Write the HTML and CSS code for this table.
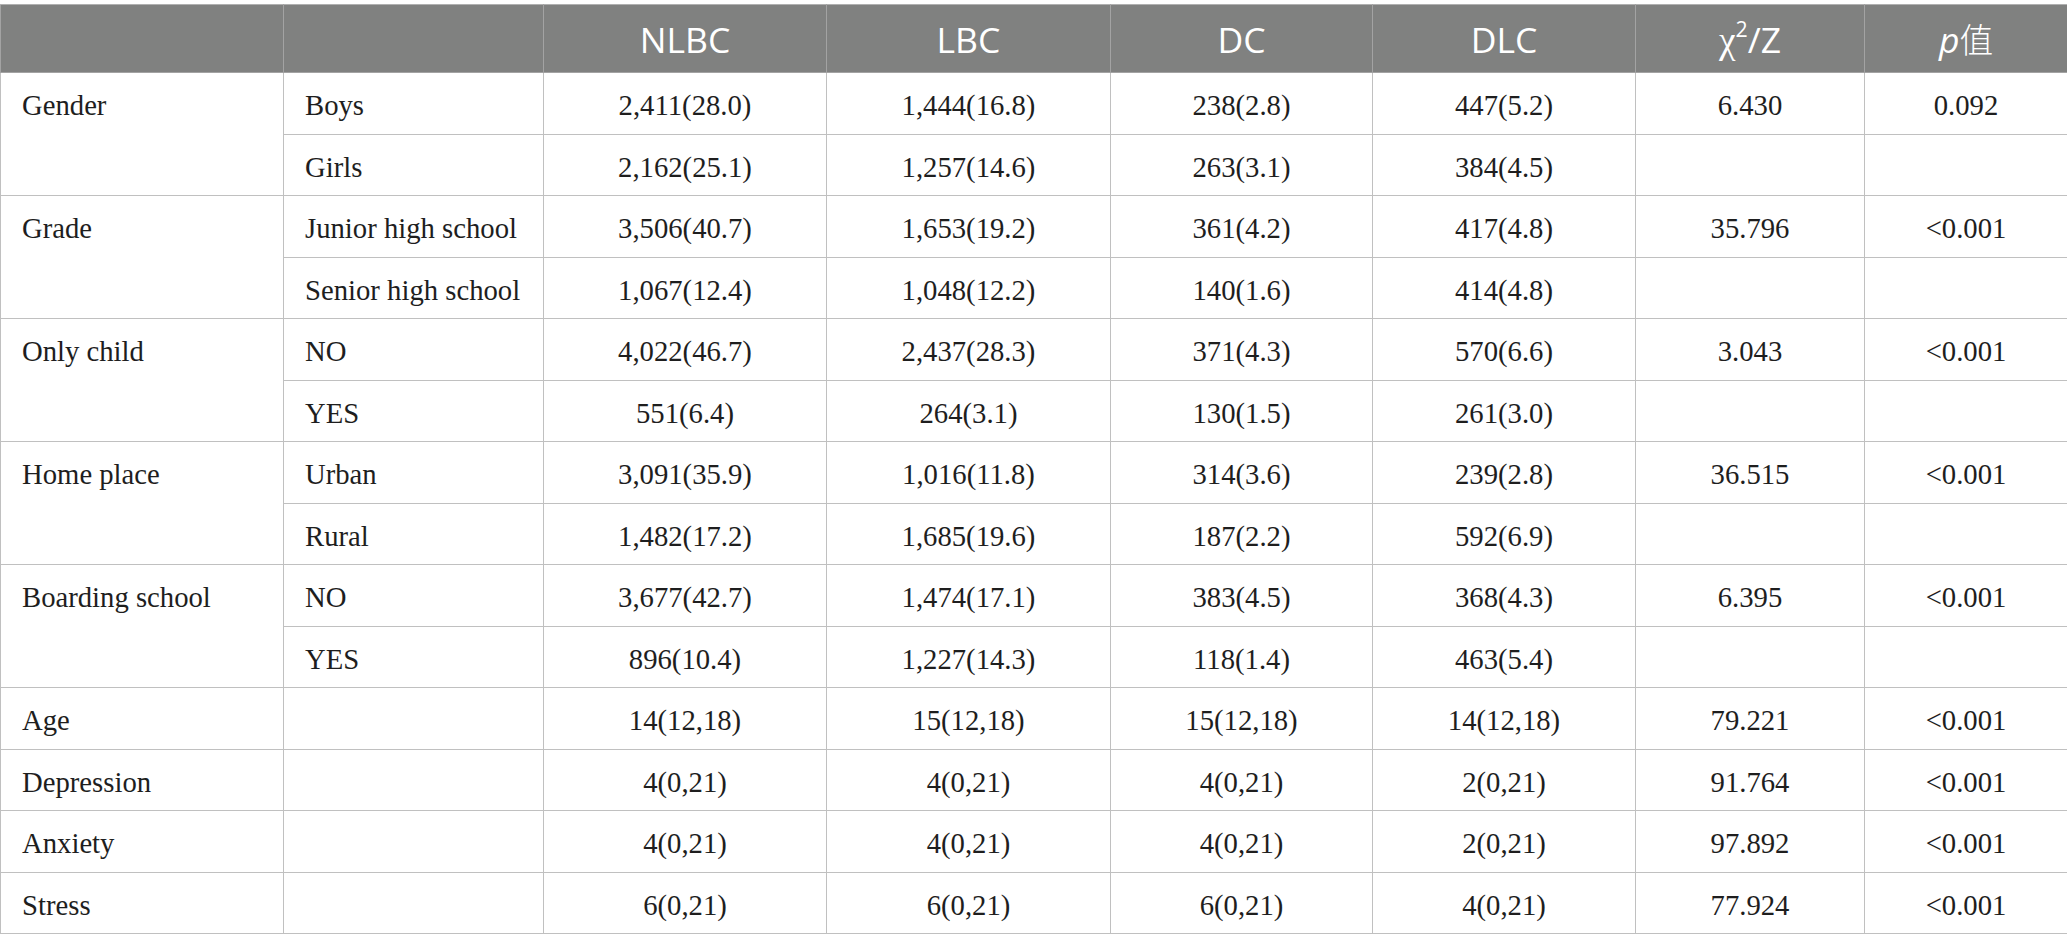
FILE: index.html
```html
<!DOCTYPE html>
<html>
<head>
<meta charset="utf-8">
<link rel="stylesheet" href="styles.css">
</head>
<body>
<div class="wrap">
<table class="data">
  <colgroup>
    <col class="c1"><col class="c2"><col class="c3"><col class="c4"><col class="c5"><col class="c6"><col class="c7"><col class="c8">
  </colgroup>
  <thead>
    <tr>
      <th></th><th></th><th>NLBC</th><th>LBC</th><th>DC</th><th>DLC</th>
      <th><span class="chi">χ</span><sup>2</sup>/Z</th>
      <th><i>p</i><span class="cjk">值</span></th>
    </tr>
  </thead>
  <tbody>
    <tr><td class="l" rowspan="2">Gender</td><td class="l">Boys</td><td>2,411(28.0)</td><td>1,444(16.8)</td><td>238(2.8)</td><td>447(5.2)</td><td>6.430</td><td>0.092</td></tr>
    <tr><td class="l">Girls</td><td>2,162(25.1)</td><td>1,257(14.6)</td><td>263(3.1)</td><td>384(4.5)</td><td></td><td></td></tr>
    <tr><td class="l" rowspan="2">Grade</td><td class="l">Junior high school</td><td>3,506(40.7)</td><td>1,653(19.2)</td><td>361(4.2)</td><td>417(4.8)</td><td>35.796</td><td>&lt;0.001</td></tr>
    <tr><td class="l">Senior high school</td><td>1,067(12.4)</td><td>1,048(12.2)</td><td>140(1.6)</td><td>414(4.8)</td><td></td><td></td></tr>
    <tr><td class="l" rowspan="2">Only child</td><td class="l">NO</td><td>4,022(46.7)</td><td>2,437(28.3)</td><td>371(4.3)</td><td>570(6.6)</td><td>3.043</td><td>&lt;0.001</td></tr>
    <tr><td class="l">YES</td><td>551(6.4)</td><td>264(3.1)</td><td>130(1.5)</td><td>261(3.0)</td><td></td><td></td></tr>
    <tr><td class="l" rowspan="2">Home place</td><td class="l">Urban</td><td>3,091(35.9)</td><td>1,016(11.8)</td><td>314(3.6)</td><td>239(2.8)</td><td>36.515</td><td>&lt;0.001</td></tr>
    <tr><td class="l">Rural</td><td>1,482(17.2)</td><td>1,685(19.6)</td><td>187(2.2)</td><td>592(6.9)</td><td></td><td></td></tr>
    <tr><td class="l" rowspan="2">Boarding school</td><td class="l">NO</td><td>3,677(42.7)</td><td>1,474(17.1)</td><td>383(4.5)</td><td>368(4.3)</td><td>6.395</td><td>&lt;0.001</td></tr>
    <tr><td class="l">YES</td><td>896(10.4)</td><td>1,227(14.3)</td><td>118(1.4)</td><td>463(5.4)</td><td></td><td></td></tr>
    <tr><td class="l">Age</td><td class="l"></td><td>14(12,18)</td><td>15(12,18)</td><td>15(12,18)</td><td>14(12,18)</td><td>79.221</td><td>&lt;0.001</td></tr>
    <tr><td class="l">Depression</td><td class="l"></td><td>4(0,21)</td><td>4(0,21)</td><td>4(0,21)</td><td>2(0,21)</td><td>91.764</td><td>&lt;0.001</td></tr>
    <tr><td class="l">Anxiety</td><td class="l"></td><td>4(0,21)</td><td>4(0,21)</td><td>4(0,21)</td><td>2(0,21)</td><td>97.892</td><td>&lt;0.001</td></tr>
    <tr><td class="l">Stress</td><td class="l"></td><td>6(0,21)</td><td>6(0,21)</td><td>6(0,21)</td><td>4(0,21)</td><td>77.924</td><td>&lt;0.001</td></tr>
  </tbody>
</table>
</div>
</body>
</html>
```

FILE: styles.css
```css
html, body {
  margin: 0;
  padding: 0;
  background: #ffffff;
}

.wrap {
  padding-top: 4px;
}

.data {
  border-collapse: collapse;
  table-layout: fixed;
  width: 2067px;
  font-family: "Liberation Serif", "Times New Roman", serif;
  font-size: 28.7px;
  color: #1e1e1e;
}

.c1 { width: 283px; }
.c2 { width: 260px; }
.c3 { width: 283px; }
.c4 { width: 284px; }
.c5 { width: 262px; }
.c6 { width: 263px; }
.c7 { width: 229px; }
.c8 { width: 203px; }

.data th {
  height: 67px;
  padding: 0;
  background: #808180;
  color: #ffffff;
  font-family: "Open Sans", "Noto Sans", sans-serif;
  font-weight: 400;
  font-size: 35.5px;
  text-align: center;
  vertical-align: middle;
  border: 1px solid #a3a3a3;
  border-top-color: #b0b0b0;
  white-space: nowrap;
}

.data th sup {
  font-size: 0.6em;
  vertical-align: 0.75em;
  line-height: 0;
}

.data th .chi {
  font-family: "Liberation Serif", "DejaVu Serif", serif;
  font-size: 1.05em;
}

.data th i {
  font-style: italic;
}

.data th .cjk {
  font-family: "Noto Sans CJK SC", "Noto Sans CJK JP", sans-serif;
  font-size: 0.95em;
  font-weight: 300;
}

.data td {
  padding: 5px 21px 0;
  height: 55.5px;
  line-height: 55.5px;
  text-align: center;
  vertical-align: top;
  border: 1px solid #c0c0c0;
  white-space: nowrap;
}

.data td.l {
  text-align: left;
}
```
